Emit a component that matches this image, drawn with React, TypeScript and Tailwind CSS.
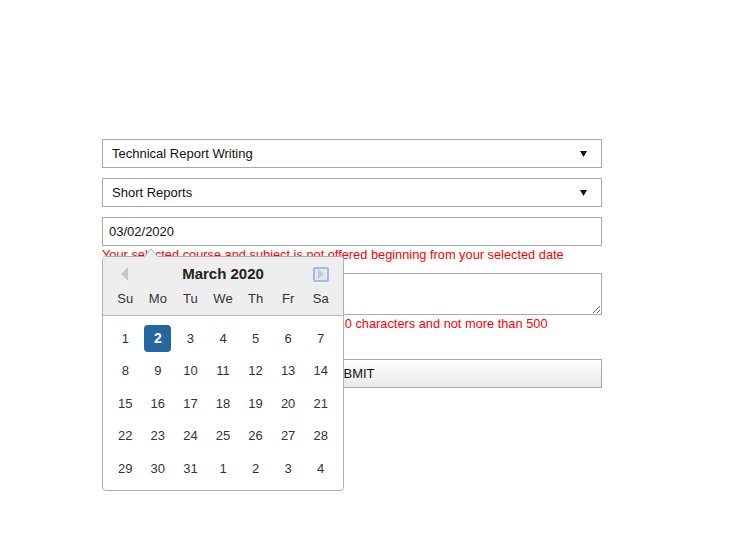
import React from "react";

const weeks: number[][] = [
  [1, 2, 3, 4, 5, 6, 7],
  [8, 9, 10, 11, 12, 13, 14],
  [15, 16, 17, 18, 19, 20, 21],
  [22, 23, 24, 25, 26, 27, 28],
  [29, 30, 31, 1, 2, 3, 4],
];

const dayNames = ["Su", "Mo", "Tu", "We", "Th", "Fr", "Sa"];

function SelectBox({ label }: { label: string }) {
  return (
    <div className="h-[29px] border border-[#a9a9a9] flex items-center justify-between pl-[9px] pr-[14px] text-[13px] text-[#111]">
      <span>{label}</span>
      <svg width="7" height="6" viewBox="0 0 7 6">
        <polygon points="0,0 7,0 3.5,6" fill="#111" />
      </svg>
    </div>
  );
}

function DatePicker() {
  return (
    <div className="absolute left-0 top-[117px] w-[242px]">
      {/* caret */}
      <svg
        className="absolute left-[41px] top-[-8px]"
        width="16"
        height="10"
        viewBox="0 0 16 10"
      >
        <polygon points="0.5,9.5 8,1 15.5,9.5" fill="#eeeeee" stroke="#b5b5b5" />
        <rect x="0" y="9" width="16" height="1" fill="#eeeeee" />
      </svg>
      <div className="border border-[#b0b0b0] rounded-[4px] bg-white overflow-hidden">
        <div className="bg-[#eeeeee] border-b border-[#b5b5b5] pt-[7px] pb-[6px] px-[6px]">
          <div className="h-[20px] flex items-center justify-between">
            <div className="w-[32px] flex justify-center">
              <svg width="8" height="14" viewBox="0 0 8 14">
                <polygon points="7,0 7,14 0,7" fill="#c8c8c8" />
              </svg>
            </div>
            <span className="text-[15px] font-bold text-[#222]">March 2020</span>
            <div className="w-[32px] flex justify-center">
              <div className="w-[16px] h-[15px] border-2 border-[#9dbbf0] rounded-[2px] bg-[#e6e6e6] flex items-center justify-center">
                <svg width="6" height="10" viewBox="0 0 6 10">
                  <polygon points="0,0 6,5 0,10" fill="#c8c8c8" />
                </svg>
              </div>
            </div>
          </div>
          <div className="grid grid-cols-7 mt-[5px] h-[20px] items-center text-[13px] text-[#333]">
            {dayNames.map((d) => (
              <span key={d} className="text-center">
                {d}
              </span>
            ))}
          </div>
        </div>
        <div className="pt-[6px] pb-[5px] px-[6px] text-[13px] text-[#333]">
          {weeks.map((week, wi) => (
            <div key={wi} className="grid grid-cols-7 h-[32.5px] items-center">
              {week.map((day, di) => {
                const active = wi === 0 && day === 2;
                return (
                  <div key={di} className="flex justify-center">
                    {active ? (
                      <span className="w-[27px] h-[27px] rounded-[4px] bg-[#2566a0] text-white font-bold flex items-center justify-center text-[14px]">
                        {day}
                      </span>
                    ) : (
                      <span>{day}</span>
                    )}
                  </div>
                );
              })}
            </div>
          ))}
        </div>
      </div>
    </div>
  );
}

export default function App() {
  return (
    <div className="min-h-[542px] bg-white pt-[139px] pl-[102px] font-['Liberation_Sans',Arial,sans-serif]">
      <div className="relative w-[500px]">
        <SelectBox label="Technical Report Writing" />
        <div className="mt-[10px]">
          <SelectBox label="Short Reports" />
        </div>
        <div className="mt-[10px] h-[29px] border border-[#a9a9a9] flex items-center pl-[6px] text-[13px] text-[#111]">
          03/02/2020
        </div>
        <p className="text-[12.8px] leading-[18px] text-[#ff0000]">
          Your selected course and subject is not offered beginning from your selected date
        </p>
        <textarea
          className="mt-[9px] block w-full h-[42px] border border-[#a9a9a9] outline-none resize-y"
          defaultValue=""
        />
        <p className="text-[12.8px] leading-[18px] text-[#ff0000]">
          Your remarks must contain a minimum of 10 characters and not more than 500
        </p>
        <button className="mt-[26px] w-full h-[29px] border border-[#a9a9a9] bg-gradient-to-b from-white to-[#e9e9e9] pr-[4px] text-[13px] text-[#111]">
          SUBMIT
        </button>
        <DatePicker />
      </div>
    </div>
  );
}
